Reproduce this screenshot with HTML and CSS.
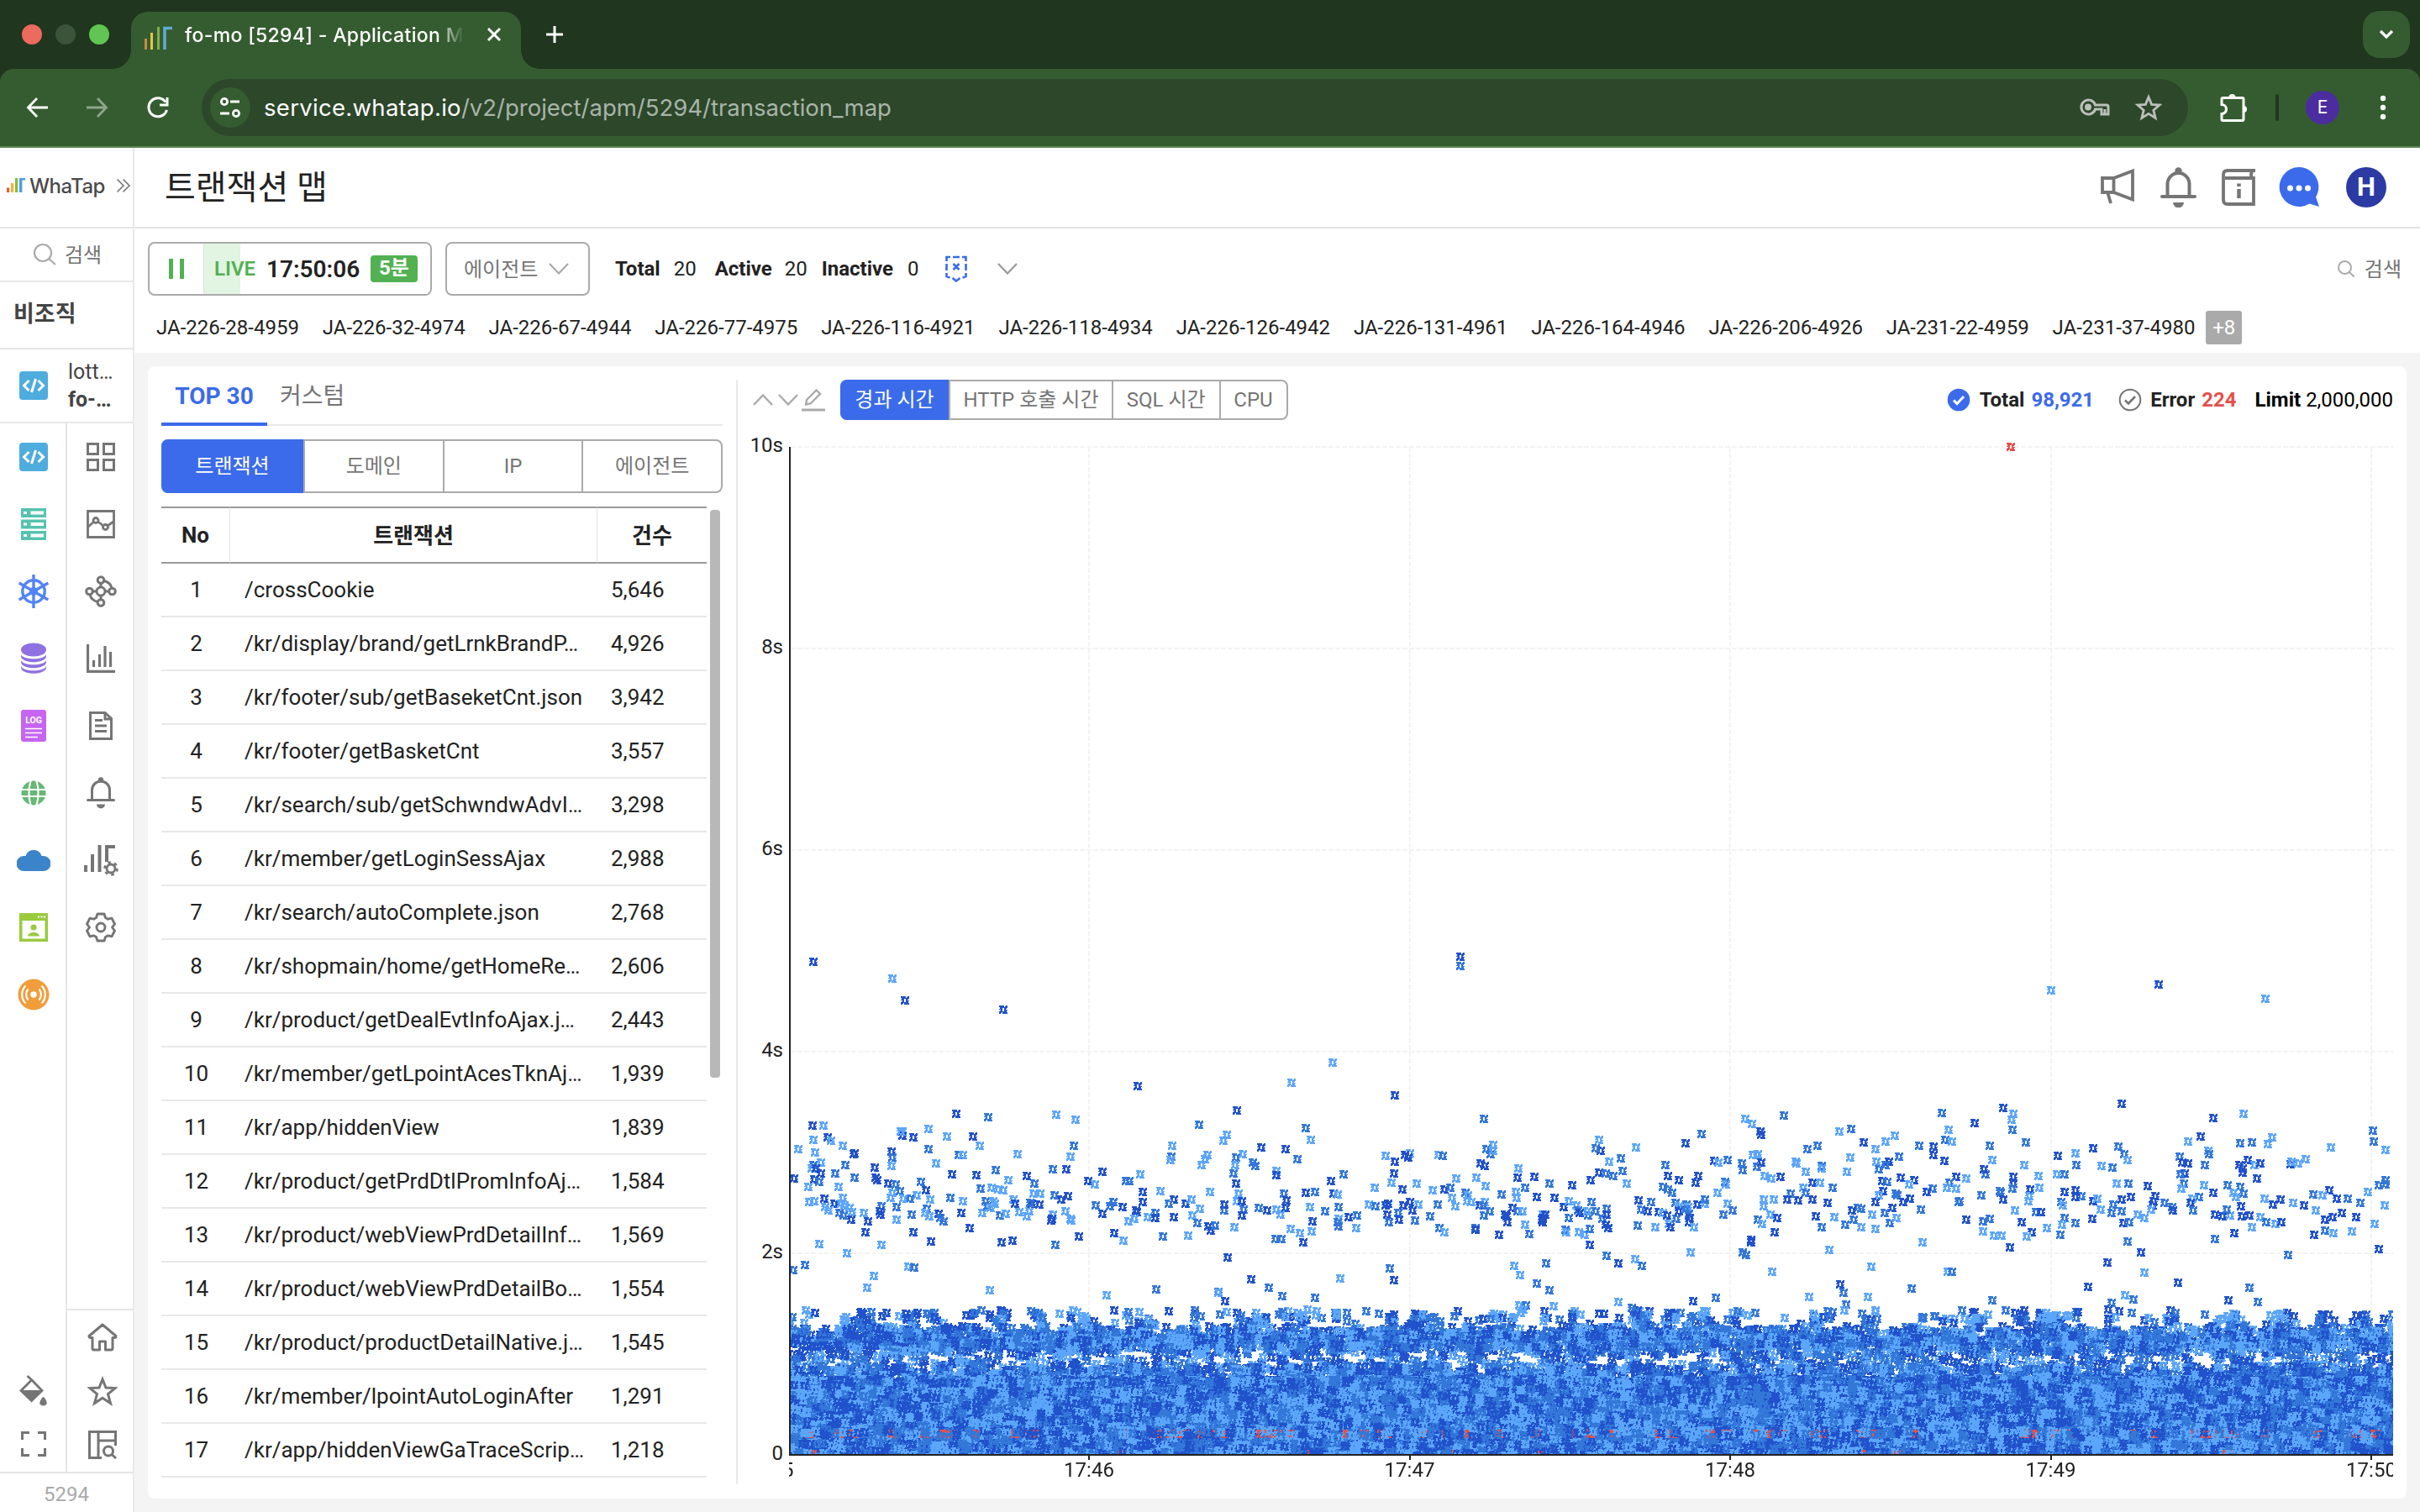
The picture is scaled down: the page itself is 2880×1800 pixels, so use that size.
FILE: index.html
```html
<!DOCTYPE html>
<html lang="ko">
<head>
<meta charset="utf-8">
<title>fo-mo [5294] - Application Monitoring</title>
<link rel="stylesheet" href="styles.css">
</head>
<body>
<div class="tabstrip">
  <div class="lights"><i class="red"></i><i class="off"></i><i class="green"></i></div>
  <div class="tab">
    <svg class="fav" width="34" height="28" viewBox="0 0 34 28"><path d="M1.500 15v13" stroke="#c98a4b" stroke-width="3"/><path d="M8.500 8v20" stroke="#e6c543" stroke-width="3"/><path d="M16.500 1v27" stroke="#7fae4a" stroke-width="3"/><path d="M24 28V2.500h9" stroke="#62a9d0" stroke-width="3.500" fill="none"/></svg>
    <span class="tab-title">fo-mo [5294] - Application Mo</span>
    <svg class="x" width="18" height="18" viewBox="0 0 18 18"><path d="M2 2l14 14M16 2L2 16" stroke="#fff" stroke-width="3"/></svg>
  </div>
  <svg class="plus" width="22" height="22" viewBox="0 0 22 22"><path d="M11 1v20M1 11h20" stroke="#fff" stroke-width="3"/></svg>
  <div class="tabmenu"><svg width="18" height="12" viewBox="0 0 18 12"><path d="M2 2l7 7 7-7" stroke="#fff" stroke-width="3.200" fill="none"/></svg></div>
</div>
<div class="toolbar">
  <svg class="nav" width="28" height="28" viewBox="0 0 28 28" fill="none" stroke="#fff" stroke-width="2.800"><path d="M27 14H4M14 3L3.500 14 14 25"/></svg>
  <svg class="nav fwd" width="28" height="28" viewBox="0 0 28 28" fill="none" stroke="#8ea68b" stroke-width="2.800"><path d="M1 14h23M14 3l10.500 11L14 25"/></svg>
  <svg class="nav" width="28" height="28" viewBox="0 0 28 28" fill="none" stroke="#fff" stroke-width="3"><path d="M24.500 17A11 11 0 1 1 23 7.500"/><path d="M25 2v9h-9"/></svg>
  <div class="omnibox">
    <div class="chip"><svg width="28" height="26" viewBox="0 0 28 26" fill="none" stroke="#fff" stroke-width="2.800"><circle cx="7" cy="6" r="3.600"/><path d="M14 6h11M2 20h11"/><circle cx="21" cy="20" r="3.600"/></svg></div>
    <span class="url"><b>service.whatap.io</b>/v2/project/apm/5294/transaction_map</span>
    <svg class="key" width="38" height="26" viewBox="0 0 38 26" fill="none" stroke="#bbc0b9" stroke-width="3"><path d="M19.500 10H33q2 0 2 2v9h-8v-6h-7.500A8.500 8.500 0 1 1 19.500 10z"/><circle cx="11" cy="12.500" r="4" fill="#bbc0b9" stroke="none"/><path d="M31 15v5"/></svg>
    <svg class="ostar" width="32" height="32" viewBox="0 0 32 32" fill="none" stroke="#bbc0b9" stroke-width="2.800"><path d="M16 3.500l3.600 8.800 9.400.7-7.200 6.200 2.300 9.200-8.100-5-8.100 5 2.300-9.200L3 13l9.400-.7z"/></svg>
  </div>
  <svg class="puzzle" width="34" height="36" viewBox="0 0 34 36" fill="none" stroke="#fff" stroke-width="3"><path d="M3 8q0-1.500 1.500-1.500h23Q29 6.500 29 8v24q0 1.500-1.500 1.500h-23Q3 33.500 3 32v-6.500a5.500 5.500 0 0 0 0-11z"/><path d="M11.500 6a4 4 0 0 1 8 0zM29 16a4 4 0 0 1 0 8z" fill="#fff" stroke="none"/></svg>
  <i class="tdiv"></i>
  <span class="acct">E</span>
  <svg class="dots" width="8" height="30" viewBox="0 0 8 30" fill="#fff"><circle cx="4" cy="4" r="3.200"/><circle cx="4" cy="15" r="3.200"/><circle cx="4" cy="26" r="3.200"/></svg>
</div>

<div class="app">
<aside class="side">
  <div class="logo">
    <svg width="22" height="18" viewBox="0 0 22 18"><path d="M0 11.500h3.200V17H0z" fill="#e2603a"/><path d="M5 6h3.200v11H5z" fill="#f1b43b"/><path d="M10 0h3.200v17H10z" fill="#85bb3c"/><path d="M15 0h7v2.500h-3.600V17H15z" fill="#4b9ee0"/></svg>
    <span>WhaTap</span>
    <svg width="18" height="18" viewBox="0 0 18 18" fill="none" stroke="#777" stroke-width="1.600"><path d="M1.500 1.500L9 9l-7.500 7.500M8.500 1.500L16 9l-7.500 7.500"/></svg>
  </div>
  <div class="side-search"><svg width="28" height="28" viewBox="0 0 28 28" fill="none" stroke="#aaa" stroke-width="2.200"><circle cx="12" cy="12" r="10"/><path d="M19 19l8 7"/></svg><span>검색</span></div>
  <div class="org">비조직</div>
  <div class="proj">
    <svg width="34" height="34" viewBox="0 0 34 34"><rect width="34" height="34" rx="4" fill="#4facde"/><path d="M11.500 11L5.500 17l6 6M22.500 11l6 6-6 6M19.500 9l-5 16" stroke="#fff" stroke-width="3" fill="none"/></svg>
    <div><p>lott…</p><p class="b">fo-…</p></div>
  </div>
  <div class="cols">
    <div class="col left">
      <a><svg width="34" height="34" viewBox="0 0 34 34"><rect width="34" height="34" rx="4" fill="#4facde"/><path d="M11.500 11L5.500 17l6 6M22.500 11l6 6-6 6M19.500 9l-5 16" stroke="#fff" stroke-width="3" fill="none"/></svg></a>
      <a><svg width="30" height="38" viewBox="0 0 30 38"><path d="M0 0h30v11H0zM0 13.500h30v11H0zM0 27h30v11H0z" fill="#56c3b0"/><path d="M3 4h4v3H3zM11.500 3.500H27v4H11.500zM3 17.500h4v3H3zM11.500 17H27v4H11.500zM3 31h4v3H3zM11.500 30.500H27v4H11.500z" fill="#fff"/></svg></a>
      <a><svg width="38" height="40" viewBox="0 0 38 40" fill="none" stroke="#5383f5"><circle cx="19" cy="20" r="13.200" stroke-width="3.400"/><path d="M19 0v40M1.700 10l34.600 20M36.300 10L1.700 30" stroke-width="3.400"/><circle cx="19" cy="20" r="5" fill="#5383f5" stroke="none"/></svg></a>
      <a><svg width="30" height="38" viewBox="0 0 30 38" fill="#8f71e1"><ellipse cx="15" cy="8.500" rx="15" ry="8"/><path d="M0 14c2 7 28 7 30 0v2.500c-1 9-29 9-30 0zM0 21c2 7 28 7 30 0v2.500c-1 9-29 9-30 0zM0 28c2 7 28 7 30 0v2c-1 9-29 9-30 0z"/></svg></a>
      <a><svg width="30" height="38" viewBox="0 0 30 38"><rect width="30" height="38" rx="3" fill="#c565f0"/><path d="M5 22.500h20M5 27.500h20M5 32.500h15" stroke="#fff" stroke-width="1.700"/><text x="15" y="16" text-anchor="middle" fill="#fff" font-size="10.500" font-weight="700" font-family="Roboto">LOG</text></svg></a>
      <a><svg width="30" height="30" viewBox="0 0 30 30"><circle cx="15" cy="15" r="14.500" fill="#66b873"/><g fill="none" stroke="#fff" stroke-width="2.200"><path d="M0 11h30M0 19h30"/><ellipse cx="15" cy="15" rx="5.500" ry="18"/></g></svg></a>
      <a><svg width="40" height="28" viewBox="0 0 40 28"><path d="M9 27a9 9 0 0 1-1-18h2.500a10 10 0 0 1 19 0H32a9 9 0 0 1-1 18z" fill="#3c84ca"/></svg></a>
      <a><svg width="34" height="34" viewBox="0 0 34 34"><path d="M0 0h34v34H0z" fill="#9acb3f"/><path d="M3.500 9h27v21.500h-27z" fill="#fff"/><circle cx="17" cy="17" r="3.600" fill="#9acb3f"/><path d="M10 27.500c0-6 14-6 14 0z" fill="#9acb3f"/><path d="M22 3.500h2v2h-2zM25.500 3.500h2v2h-2zM29 3.500h2v2h-2z" fill="#fff"/></svg></a>
      <a><svg width="38" height="38" viewBox="0 0 38 38"><circle cx="19" cy="19" r="18.500" fill="#f09d3a"/><circle cx="19" cy="19" r="3.700" fill="#fff"/><g fill="none" stroke="#fff" stroke-width="2.200"><path d="M12.500 12.500a10 10 0 0 0 0 13M25.500 12.500a10 10 0 0 1 0 13M9.500 8.500a15 15 0 0 0 0 21M28.500 8.500a15 15 0 0 1 0 21"/></g></svg></a>
      <span class="grow"></span>
      <a class="s"><svg width="34" height="38" viewBox="0 0 34 38"><path d="M9.500 2l6 5.500L27 19.500 14.500 31.500 2 19.500 14.500 7" fill="none" stroke="#757575" stroke-width="2.800"/><path d="M2 19h25L14.500 32z" fill="#757575"/><path d="M28.500 27c5 6 5 10 0 10s-5-4 0-10z" fill="#757575" stroke="#757575"/></svg></a>
      <a class="s"><svg width="30" height="30" viewBox="0 0 30 30" fill="none" stroke="#757575" stroke-width="3"><path d="M1.500 10V1.500H10M20 1.500h8.500V10M28.500 20v8.500H20M10 28.500H1.500V20"/></svg></a>
    </div>
    <div class="col right">
      <a><svg width="34" height="34" viewBox="0 0 34 34" fill="none" stroke="#757575" stroke-width="3"><path d="M1.500 1.500h12v12h-12zM20.500 1.500h12v12h-12zM1.500 20.500h12v12h-12zM20.500 20.500h12v12h-12z"/></svg></a>
      <a><svg width="34" height="34" viewBox="0 0 34 34" fill="none" stroke="#757575" stroke-width="2.800"><path d="M1.500 1.500h31v31h-31z"/><path d="M2 20l7-6M13.500 14l6.500 5M25 19l7-5"/><circle cx="11" cy="12.500" r="3"/><circle cx="22.500" cy="20.500" r="3"/></svg></a>
      <a><svg width="38" height="38" viewBox="0 0 38 38" fill="none" stroke="#757575" stroke-width="3"><circle cx="19" cy="19" r="5"/><circle cx="19" cy="5.500" r="3.800"/><circle cx="19" cy="32.500" r="3.800"/><circle cx="5.500" cy="19" r="3.800"/><circle cx="32.500" cy="19" r="3.800"/><path d="M19 9.500V14M19 24v4.500M9 19h5M24 19h5M23 6.500c5 1.500 8 4 9 8.500M15 31.500c-5-1.500-8-4-9-8.500"/></svg></a>
      <a><svg width="34" height="34" viewBox="0 0 34 34" fill="none" stroke="#757575" stroke-width="3.200"><path d="M1.500 0v32.300H34M8.500 27v-8M15.500 27V12M22 27V2M28.500 27V9"/></svg></a>
      <a><svg width="28" height="34" viewBox="0 0 28 34" fill="none" stroke="#757575" stroke-width="3"><path d="M1.500 1.500H19l7.500 7v24h-25z"/><path d="M19 1v8h8M7 10.500h9M7 17h14M7 23.500h14"/></svg></a>
      <a><svg width="34" height="38" viewBox="0 0 34 38"><path d="M6.500 26V15.500a10.500 10.500 0 0 1 21 0V26M1.500 27.500h31" fill="none" stroke="#757575" stroke-width="3" stroke-linecap="round"/><circle cx="17" cy="3.500" r="3.200" fill="#757575"/><path d="M12 32.500h10a5 5 0 0 1-10 0z" fill="#757575"/></svg></a>
      <a><svg width="42" height="38" viewBox="0 0 42 38" fill="none" stroke="#757575" stroke-width="4"><path d="M3 33v-8M11 33V12M19.500 33V1M28 21V3h10"/><circle cx="33" cy="29" r="5" stroke-width="2.800"/><circle cx="33" cy="29" r="7.500" stroke-width="2.600" stroke-dasharray="3.600 4.250"/></svg></a>
      <a><svg width="36" height="36" viewBox="0 0 36 36" fill="none" stroke="#757575" stroke-width="2.900" stroke-linejoin="round"><path d="M14 2h8l1.500 4.500 3 1.700 4.500-1 3.500 6.800-3 4 3 4-3.500 6.800-4.500-1-3 1.700L22 34h-8l-1.500-4.500-3-1.700-4.500 1L1.500 22l3-4-3-4L5 7.200l4.500 1 3-1.700z"/><circle cx="18" cy="18" r="5"/></svg></a>
      <span class="grow"></span>
      <div class="r-foot">
      <a class="s"><svg width="36" height="34" viewBox="0 0 36 34" fill="none" stroke="#757575" stroke-width="3" stroke-linejoin="round"><path d="M18 2l16 13.500q0 2-2 2h-2V30q0 2-2 2h-6.500V22h-7v10H8q-2 0-2-2V17.500H4q-2 0-2-2z"/></svg></a>
      <a class="s"><svg width="36" height="36" viewBox="0 0 36 36" fill="none" stroke="#757575" stroke-width="3"><path d="M18 4l4 10 11 .6-8.500 7 3 10.900L18 26.300 8.500 32.500l3-10.900L3 14.600 14 14z"/></svg></a>
      <a class="s"><svg width="36" height="34" viewBox="0 0 36 34" fill="none" stroke="#757575" stroke-width="3"><path d="M17 32.500H2.500v-31h31V18M13 2v30M13 12h20"/><circle cx="25" cy="24.500" r="5.500"/><path d="M29 28.500l5 4.500"/></svg></a>
      </div>
    </div>
  </div>
  <div class="pid">5294</div>
</aside>

<main class="main">
  <header class="head">
    <h1>트랜잭션 맵</h1>
    <div class="hicons">
      <svg width="48" height="48" viewBox="0 0 48 48" fill="none" stroke="#757575" stroke-width="3.800"><path d="M6 13h13.500v17H6zM19.500 13L42 4.500v34L19.500 30M12.500 31l3.500 12"/></svg>
      <svg width="48" height="48" viewBox="0 0 48 48"><path d="M11.500 33V20a13 13 0 0 1 26 0v13M5 35h39" fill="none" stroke="#757575" stroke-width="4" stroke-linecap="round"/><circle cx="24.500" cy="4.500" r="4.200" fill="#757575"/><path d="M18 42h13a6.500 6.500 0 0 1-13 0z" fill="#757575"/></svg>
      <svg width="48" height="48" viewBox="0 0 48 48" fill="none" stroke="#757575" stroke-width="3.800"><path d="M44 4H11q-5 0-5 5v30q0 5 5 5h31V13H8M40 5q-2 4 0 8"/><path d="M24.500 26v11M24.500 19.500v3.600" stroke-width="4.500"/></svg>
      <svg width="48" height="48" viewBox="0 0 48 48"><path d="M24.500 0a23.500 23.500 0 1 0 12 43.500L48 47l-4-11.500A23.500 23.500 0 0 0 24.500 0z" fill="#3b6bea"/><g fill="#fff"><circle cx="13.500" cy="25" r="3.500"/><circle cx="24" cy="25" r="3.500"/><circle cx="34.500" cy="25" r="3.500"/></g></svg>
      <span class="avatar">H</span>
    </div>
  </header>

  <section class="controls">
    <div class="ctl-row">
      <div class="live">
        <div class="pause"><i></i><i></i></div>
        <div class="live-in"><span class="lv">LIVE</span><span class="time">17:50:06</span><span class="range">5분</span></div>
      </div>
      <div class="select"><span>에이전트</span><svg width="24" height="14" viewBox="0 0 24 14" fill="none" stroke="#aaa" stroke-width="2.200"><path d="M1 1l11 11.500L23 1"/></svg></div>
      <div class="counts"><b>Total</b><span class="c1">20</span><b>Active</b><span class="c2">20</span><b>Inactive</b><span class="c3">0</span></div>
      <svg class="shield" width="26" height="32" viewBox="0 0 26 32" fill="none" stroke="#3b6bea" stroke-width="2.600"><path d="M1.500 7V2H6M9 2h8M20 2h4.500v5M1.500 10v8M24.500 10v8M1.500 21v4l4 1.500M24.500 21v4l-4 1.500M8.500 27l4.500 3.500 4.500-3.500M9.500 10l7 7M16.500 10l-7 7"/></svg>
      <svg width="24" height="14" viewBox="0 0 24 14" fill="none" stroke="#999" stroke-width="2.200"><path d="M1 1l11 11.500L23 1"/></svg>
      <div class="find"><svg width="20" height="20" viewBox="0 0 20 20" fill="none" stroke="#aaa" stroke-width="2"><circle cx="8.500" cy="8.500" r="7.500"/><path d="M14 14l5.500 5.500"/></svg><span>검색</span></div>
    </div>
    <div class="agents"><span>JA-226-28-4959</span><span>JA-226-32-4974</span><span>JA-226-67-4944</span><span>JA-226-77-4975</span><span>JA-226-116-4921</span><span>JA-226-118-4934</span><span>JA-226-126-4942</span><span>JA-226-131-4961</span><span>JA-226-164-4946</span><span>JA-226-206-4926</span><span>JA-231-22-4959</span><span>JA-231-37-4980</span><em>+8</em></div>
  </section>

  <section class="card">
    <div class="list">
      <div class="tabs"><span class="on">TOP 30</span><span>커스텀</span></div>
      <div class="seg"><span class="on">트랜잭션</span><span>도메인</span><span>IP</span><span>에이전트</span></div>
      <div class="tablewrap">
      <table>
        <thead><tr><th class="no">No</th><th>트랜잭션</th><th class="cnt">건수</th></tr></thead>
        <tbody>
        <tr><td>1</td><td>/crossCookie</td><td>5,646</td></tr>
        <tr><td>2</td><td>/kr/display/brand/getLrnkBrandP…</td><td>4,926</td></tr>
        <tr><td>3</td><td>/kr/footer/sub/getBaseketCnt.json</td><td>3,942</td></tr>
        <tr><td>4</td><td>/kr/footer/getBasketCnt</td><td>3,557</td></tr>
        <tr><td>5</td><td>/kr/search/sub/getSchwndwAdvI…</td><td>3,298</td></tr>
        <tr><td>6</td><td>/kr/member/getLoginSessAjax</td><td>2,988</td></tr>
        <tr><td>7</td><td>/kr/search/autoComplete.json</td><td>2,768</td></tr>
        <tr><td>8</td><td>/kr/shopmain/home/getHomeRe…</td><td>2,606</td></tr>
        <tr><td>9</td><td>/kr/product/getDealEvtInfoAjax.j…</td><td>2,443</td></tr>
        <tr><td>10</td><td>/kr/member/getLpointAcesTknAj…</td><td>1,939</td></tr>
        <tr><td>11</td><td>/kr/app/hiddenView</td><td>1,839</td></tr>
        <tr><td>12</td><td>/kr/product/getPrdDtlPromInfoAj…</td><td>1,584</td></tr>
        <tr><td>13</td><td>/kr/product/webViewPrdDetailInf…</td><td>1,569</td></tr>
        <tr><td>14</td><td>/kr/product/webViewPrdDetailBo…</td><td>1,554</td></tr>
        <tr><td>15</td><td>/kr/product/productDetailNative.j…</td><td>1,545</td></tr>
        <tr><td>16</td><td>/kr/member/lpointAutoLoginAfter</td><td>1,291</td></tr>
        <tr><td>17</td><td>/kr/app/hiddenViewGaTraceScrip…</td><td>1,218</td></tr>
        </tbody>
      </table>
      <i class="thumb"></i>
      </div>
    </div>
    <div class="chart">
      <div class="chead">
        <div class="cicons">
          <svg width="24" height="14" viewBox="0 0 24 14" fill="none" stroke="#aaa" stroke-width="2.400"><path d="M1 13L12 1.500 23 13"/></svg>
          <svg width="24" height="14" viewBox="0 0 24 14" fill="none" stroke="#aaa" stroke-width="2.400"><path d="M1 1l11 11.500L23 1"/></svg>
          <svg width="28" height="28" viewBox="0 0 28 28" fill="none" stroke="#aaa" stroke-width="2.400"><path d="M6 14L17.500 2.500l4.500 4.500L10.500 18.500 5 19.500z"/><path d="M0 26h28" stroke-width="3"/></svg>
        </div>
        <div class="metric"><span class="on">경과 시간</span><span>HTTP 호출 시간</span><span>SQL 시간</span><span>CPU</span></div>
        <div class="stat">
          <svg width="28" height="28" viewBox="0 0 28 28"><circle cx="14" cy="14" r="13.300" fill="#3b6bea"/><path d="M8 14.500l4 4 8-8.500" stroke="#fff" stroke-width="3" fill="none"/></svg>
          <b>Total</b><b class="blue">98,921</b>
          <svg class="e" width="28" height="28" viewBox="0 0 28 28"><circle cx="14" cy="14" r="12.300" fill="none" stroke="#757575" stroke-width="2"/><path d="M8 14.500l4 4 8-8.500" stroke="#757575" stroke-width="2.600" fill="none"/></svg>
          <b>Error</b><b class="red">224</b><b class="lim">Limit</b><span>2,000,000</span>
        </div>
      </div>
      <div class="plot">
        <div class="ylab"><span>10s</span><span>8s</span><span>6s</span><span>4s</span><span>2s</span><span>0</span></div>
        <div class="area">
          <canvas id="map" width="1909" height="1216"></canvas>
          <div class="xlab"><span>17:45</span><span>17:46</span><span>17:47</span><span>17:48</span><span>17:49</span><span>17:50</span></div>
        </div>
      </div>
    </div>
  </section>
</main>
</div>
<script src="map.js"></script>
</body>
</html>
```
FILE: styles.css
```css
* { box-sizing: border-box; }
body { margin: 0; width: 2880px; height: 1800px; overflow: hidden; background: #20361e; color: #222; font-family: Roboto, "Noto Sans CJK KR", sans-serif; font-size: 24px; }
svg { display: block; flex: none; }
p, h1 { margin: 0; }

/* browser window */
.tabstrip { display: flex; align-items: center; height: 82px; padding-right: 12px; }
.lights { display: flex; gap: 16px; padding-left: 26px; width: 156px; }
.lights i { width: 24px; height: 24px; border-radius: 50%; }
.lights .red { background: #ed6a5e; }
.lights .off { background: #3c5439; }
.lights .green { background: #61c554; }
.tab { position: relative; display: flex; align-items: center; width: 464px; height: 68px; margin-top: 14px; padding: 0 23px 14px 16px; border-radius: 20px 20px 0 0; background: #355c30; font-family: Inter, sans-serif; }
.tab::before, .tab::after { content: ""; position: absolute; bottom: 0; width: 22px; height: 22px; }
.tab::before { left: -22px; background: radial-gradient(circle at 0 0, transparent 21.500px, #355c30 22px); }
.tab::after { right: -22px; background: radial-gradient(circle at 100% 0, transparent 21.500px, #355c30 22px); }
.fav { margin-top: 7px; }
.tab-title { flex: 1; overflow: hidden; margin-left: 14px; margin-right: 24px; color: #fff; font-size: 23px; font-weight: 500; letter-spacing: 0.35px; line-height: 30px; padding-top: 2px; white-space: nowrap; -webkit-mask-image: linear-gradient(90deg, #000 300px, transparent 332px); mask-image: linear-gradient(90deg, #000 300px, transparent 332px); }
.plus { margin-left: 29px; }
.tabmenu { display: flex; align-items: center; justify-content: center; width: 56px; height: 56px; margin-left: auto; border-radius: 20px; background: #355c30; }
.toolbar { display: flex; align-items: center; height: 94px; padding: 0 40px 0 30px; border-bottom: 2px solid #5f8457; border-radius: 16px 16px 0 0; background: #355c30; }
.nav { margin-right: 44px; }
.omnibox { display: flex; align-items: center; width: 2364px; height: 68px; margin-left: -6px; padding: 0 31px 0 10px; border-radius: 34px; background: #2d472b; }
.chip { display: flex; align-items: center; justify-content: center; width: 48px; height: 48px; border-radius: 50%; background: #355c30; }
.url { flex: 1; margin-left: 16px; color: #a9b5a8; font-family: Inter, sans-serif; font-size: 27.500px; }
.url b { color: #fff; font-weight: 400; letter-spacing: 0.3px; }
.ostar { margin-left: 29px; }
.puzzle { margin-left: 37px; }
.tdiv { width: 4px; height: 32px; margin-left: 33px; border-radius: 2px; background: #20361e; }
.acct { width: 40px; height: 40px; margin: 0 48px 0 32px; border-radius: 50%; background: #4c2d9f; color: #fff; font: 21px/40px Inter, sans-serif; text-align: center; }

/* application shell */
.app { display: flex; height: 1624px; background: #fff; }
.side { display: flex; flex-direction: column; width: 160px; border-right: 2px solid #e9e9e9; }
.logo { display: flex; align-items: center; height: 96px; padding: 0 0 4px 8px; border-bottom: 2px solid #e6e6e6; }
.logo span { width: 108px; padding-left: 5px; color: #4a4a4a; font-family: Inter, sans-serif; font-size: 24px; font-weight: 500; letter-spacing: -0.5px; }
.side-search { display: flex; align-items: center; gap: 10px; height: 64px; padding: 0 0 0 39px; border-bottom: 2px solid #e6e6e6; color: #757575; }
.side-search span { padding-bottom: 4px; }
.org { height: 80px; padding-left: 16px; border-bottom: 2px solid #e6e6e6; color: #444; font-size: 27px; font-weight: 700; line-height: 77px; }
.proj { display: flex; align-items: center; gap: 24px; height: 88px; padding-left: 23px; border-bottom: 2px solid #e6e6e6; color: #444; }
.proj p { font-size: 25px; line-height: 33px; }
.proj .b { font-weight: 700; }
.cols { display: flex; flex: 1; }
.col { display: flex; flex-direction: column; align-items: center; }
.left { width: 80px; border-right: 2px solid #e6e6e6; padding-bottom: 1px; }
.right { width: 78px; }
.col a { display: flex; align-items: center; justify-content: center; width: 80px; height: 80px; }
.left a { padding-left: 1px; }
.right a { padding-left: 2px; }
.col a.s { height: 64px; }
.grow { flex: 1; }
.r-foot { width: 78px; border-top: 2px solid #e6e6e6; }
.r-foot a { padding-left: 4px; }
.pid { height: 48px; border-top: 2px solid #e6e6e6; color: #aaa; line-height: 51px; text-align: center; }

.main { display: flex; flex-direction: column; flex: 1; background: #f4f4f4; }
.head { display: flex; align-items: center; justify-content: space-between; height: 96px; padding: 0 40px 0 36px; border-bottom: 2px solid #e3e3e3; background: #fff; }
.head h1 { padding-top: 1px; font-size: 40px; font-weight: 400; line-height: 48px; }
.hicons { display: flex; align-items: center; gap: 24px; }
.avatar { width: 48px; height: 48px; margin-left: 8px; border-radius: 50%; background: #2c3aa3; color: #fff; font-size: 31px; font-weight: 700; line-height: 48px; text-align: center; }

.controls { height: 148px; padding: 16px 22px 0 16px; background: #fff; }
.ctl-row { display: flex; align-items: center; height: 64px; }
.live { display: flex; width: 338px; height: 64px; border: 2px solid #aaa; border-radius: 8px; }
.pause { display: flex; align-items: center; gap: 8px; width: 64px; padding-left: 23px; }
.pause i { width: 5px; height: 24px; background: #52b152; }
.live-in { display: flex; flex: 1; align-items: center; padding-left: 12px; border-left: 1px solid #ddd; background: linear-gradient(90deg, #e1f5e2 43px, #fff 43px); border-radius: 0 6px 6px 0; }
.lv { width: 62px; color: #52b152; font-size: 24px; font-weight: 600; }
.time { width: 124px; font-size: 28px; font-weight: 600; }
.range { width: 56px; height: 32px; border-radius: 4px; background: #52b152; color: #fff; font-weight: 700; line-height: 31px; text-align: center; }
.select { display: flex; align-items: center; gap: 13px; width: 172px; height: 64px; margin-left: 16px; padding-left: 20px; border: 2px solid #aaa; border-radius: 8px; color: #757575; }
.select span, .find span { padding-bottom: 3px; }
.counts { display: flex; align-items: center; margin-left: 30px; }
.c1 { margin: 0 22px 0 16px; }
.c2 { margin: 0 17px 0 15px; }
.c3 { margin: 0 31px 0 17px; }
.counts b, .stat b { font-weight: 700; }
.shield { margin-right: 36px; }
.find { display: flex; align-items: center; gap: 12px; margin-left: auto; color: #757575; }
.agents { display: flex; align-items: center; gap: 27.850px; height: 40px; margin-top: 18px; padding-left: 10px; }
.agents em { width: 43px; height: 40px; margin-left: -15px; border-radius: 3px; background: #aaa; color: #fff; font-style: normal; line-height: 40px; text-align: center; }

.card { display: flex; height: 1348px; margin: 16px 16px 0; padding: 16px; border-radius: 8px; background: #fff; }
.list { width: 668px; }
.tabs { display: flex; gap: 33px; height: 55px; border-bottom: 2px solid #e8e8e8; color: #757575; font-size: 28px; line-height: 39px; }
.tabs .on { width: 126px; height: 55px; margin-right: -18px; border-bottom: 4px solid #3b6bea; color: #3b6bea; font-weight: 700; text-align: center; line-height: 40px; }
.seg { display: flex; height: 64px; margin-top: 16px; border: 2px solid #aaa; border-radius: 8px; color: #757575; line-height: 60px; text-align: center; }
.seg span { flex: 1; border-left: 2px solid #aaa; }
.seg .on { flex: 0 0 169px; margin: -2px 0 -2px -2px; border: 0; border-radius: 8px 0 0 8px; background: #3b6bea; color: #fff; line-height: 64px; }
.tablewrap { display: flex; gap: 4px; margin-top: 16px; }
table { width: 649px; table-layout: fixed; border-collapse: separate; border-spacing: 0; font-size: 26px; }
th { height: 68px; padding: 0 0 3px; border-top: 2px solid #999; border-bottom: 2px solid #999; font-weight: 700; }
th + th { border-left: 1px solid #e3e3e3; }
.no { width: 81px; padding-bottom: 1px; }
.cnt { width: 131px; }
td { height: 64px; padding: 0; border-bottom: 2px solid #e8e8e8; white-space: nowrap; }
td:first-child { text-align: center; padding-left: 2px; }
td:nth-child(2) { padding-left: 18px; }
td:last-child { padding-left: 17px; }
.thumb { width: 12px; height: 676px; margin-top: 4px; border-radius: 4px; background: #b8b8b8; }

.chart { width: 1972px; height: 1315px; margin-left: 16px; border-left: 2px solid #e9e9e9; }
.chead { display: flex; align-items: center; height: 48px; padding-left: 18px; }
.cicons { display: flex; align-items: center; gap: 6px; width: 104px; }
.cicons svg:last-child { margin-left: -2px; }
.metric { display: flex; height: 48px; border: 2px solid #aaa; border-radius: 8px; color: #757575; line-height: 44px; text-align: center; }
.metric span { width: 127.500px; border-left: 2px solid #aaa; }
.metric .on { width: 129px; margin: -2px 0 -2px -2px; border: 0; border-radius: 8px 0 0 8px; background: #3b6bea; color: #fff; line-height: 48px; }
.metric span:nth-child(2) { width: 194px; }
.metric span:nth-child(4) { width: 80px; }
.stat { display: flex; align-items: center; margin-left: auto; }
.stat svg { margin-right: 11px; }
.stat svg.e { margin-left: 29px; margin-right: 10px; }
.stat .blue { margin-left: 8px; color: #3b6bea; }
.stat .red { margin: 0 22px 0 8px; color: #e4504b; }
.stat span { margin-left: 6px; color: #000; }
.stat .lim { color: #000; }
.plot { display: flex; }
.ylab { display: flex; flex-direction: column; justify-content: space-between; width: 61px; height: 1230px; padding-right: 7px; margin-top: 15px; text-align: right; line-height: 30px; }
.area { width: 1909px; padding-top: 24px; overflow: hidden; }
.area canvas { display: block; }
.xlab { display: flex; margin-left: -215.250px; margin-top: -6px; line-height: 32px; }
.xlab span { flex: none; width: 381.500px; text-align: center; }
```
FILE: map.js
```js
// Transaction map: x 0..1909 px, y 8 (10s) .. 1208 (0s), 120 px per second
const ctx = document.getElementById('map').getContext('2d');
const COLORS = { d: '#2152cb', m: '#3377d8', l: '#5ca6fa', r: '#e4504b' };
const GLYPH = [
  '######..##',
  '######.###',
  '.#########',
  '.###..###.',
  '####..##..',
  '..##..####',
  '.###..###.',
  '#########.',
  '###.######',
  '##..######'
];
const stamps = {};
for (const k in COLORS) {
  const c = document.createElement('canvas');
  c.width = c.height = 10;
  const g = c.getContext('2d');
  g.fillStyle = COLORS[k];
  GLYPH.forEach((row, y) => [...row].forEach((ch, x) => { if (ch === '#') g.fillRect(x, y, 1, 1); }));
  stamps[k] = c;
}
let seed = 5294;
const rnd = () => {
  seed = (seed + 0x6D2B79F5) | 0;
  let t = Math.imul(seed ^ (seed >>> 15), 1 | seed);
  t = (t + Math.imul(t ^ (t >>> 7), 61 | t)) ^ t;
  return ((t ^ (t >>> 14)) >>> 0) / 4294967296;
};
const dot = (k, x, y) => ctx.drawImage(stamps[k], Math.round(x - 5), Math.round(y - 5));
const pick = () => 'dml'[Math.floor(rnd() * 3)];

// grid
ctx.fillStyle = '#f3f3f3';
for (let i = 0; i < 5; i++) for (let x = 2; x < 1909; x += 8) ctx.fillRect(x, 7 + i * 240, 6, 2);
for (let i = 1; i < 6; i++) for (let y = 8; y < 1208; y += 8) ctx.fillRect(Math.round(-25.5 + i * 381.5), y, 2, 6);

// slow transactions, grouped by block: origin x, origin y, x scale, y scale
const BLOCKS = [
  [-939, -524, 1, 1, 'd968,1145 l1062,1165 d1077,1191 d1194,1202 d1738,1139 m1738,1150 l2441,1179 d2569,1172 l2696,1189 r2393,532'],
  [-79, 676, 1.96, 2.613, 'l1422,170 l1327,232 d968,243 d1199,319 d545,328 m619,340 l778,332 l824,348 d209,366 l235,366 l211,410 l420,384 d420,397 l415,384 d445,402 l480,376 l523,400 d584,400 l176,438 l215,450 d245,402 l252,412 l280,429 l600,429 m481,438 d307,452 d306,455 m287,489 d354,496 d394,446 m395,464 l394,490 l497,484 m550,457 l560,457 d535,517 d592,519 m637,504 l688,455 m819,429 l811,463 m770,502 d801,502 d709,522 m728,546 l667,535 d167,530 m212,488 l229,482 l208,498 d218,500 d230,515 d214,532 m226,541 m263,515 m308,528 l270,557 l200,557 d357,528 d361,535 d386,546 m403,550 m413,570 l396,576 l392,591 l453,583 m438,592 l422,594 m462,541 d475,566 l484,597 m601,561 m531,591 l561,601 m614,602 l632,600 l655,566 l628,558 l642,565 d237,592 l214,600 l202,604 d261,609 l281,591 l276,610 l240,620 l247,631 m272,637 l285,614 l295,622 l302,634 m282,646 d300,658 l329,638 d340,663 m370,617 d368,642 d367,632 m406,618 l405,658 m441,643 m476,625 l472,638 l482,648 d504,640 m508,652 m516,664 d557,638 l605,638 m618,616 l626,622 l636,610 m646,645 l660,640 l678,597 d683,608 l691,635 l709,648 l716,632 d722,609 d738,612 m717,605 l726,578 l741,577 m774,583 d790,596 d806,585 l799,633 l770,643 d766,660 d769,655 l811,655 l813,660 d333,698 d445,698 d577,685 d486,726 m226,734 l226,734 l370,737 d651,728 d676,723 m777,737 d831,710 l291,762 m192,800 m165,815 l434,804 m446,807 l353,834 l337,870 l623,878 m1111,363 d886,510 l974,517 d853,538 l868,548 m941,539 m948,539 l1022,570 d980,572 d980,603 d1052,596 m1041,610 d1079,608 l1093,597 m911,603 m870,614 m903,617 d932,618 d885,640 d965,630 d967,635 l961,657 l946,665 l992,650 m1010,638 d1009,652 d1052,650 l1095,646 l1113,625 m1107,669 d914,699 l935,724 m1028,712 l1086,709 d1132,680 d1138,692 m1149,677 l1048,429 m1046,462 l1044,473 l1131,457 l1126,470 l1117,489 l1137,572 m1170,630 d1170,611 l1168,412 l1176,395 m1198,464 l1213,455 l1195,489 m1191,516 d1197,546 l1203,577 l1199,600 d1211,600 m1216,627 d1211,646 l1193,682 d1257,433 d1314,439 m1340,470 m1237,481 m1243,490 l1291,506 d1291,521 m1360,374 l1372,409 m1449,517 d1419,538 m1310,577 d1315,598 d1314,621 m1250,622 d1271,630 l1292,627 l1302,643 l1324,687 d1360,575 m1381,572 l1370,619 m1406,632 d1376,664 l1374,694 l1347,699 m1289,719 m1304,719 d1354,729 d1424,577 l1434,580 m1436,619 l1436,657 m1434,667 m1436,680 d1460,651 m1479,645 l1478,685 l1521,559 l1507,612 d1177,776 d1233,844 m1274,870 m1305,896 m1157,882 l1157,886 d1172,912 m1381,902 l1440,841 m1012,876 l895,893'],
  [701, 696, 3, 3, 'd60,252 m378,336 l27,468 d60,489 d57,531 l48,564 d87,588 l114,459 d96,465 d108,474 l138,567 l216,465 m231,468 d366,495 d381,504 m387,444 m402,462 l411,429 l411,450 l279,549 l351,546 l384,576 l195,591 d237,588 m258,582 l264,618 l276,648 m312,600 l321,609 l318,630 l333,633 d363,645 l381,633 m375,645 m399,666 m378,681 m213,642 m186,684 m132,699 l144,642 d114,633 d123,663 d90,645 m72,672 d75,696 d33,678 m39,705 d27,645 d36,639 m-9,648 m219,726 l237,741 m348,726 d348,732 d432,750 m441,606 l501,513 d498,546 d558,543 m525,582 l492,597 l495,618 m612,567 d567,615 d630,618 d480,654 m498,666 l516,666 d453,678 d459,684 d462,705 l525,714 m540,747 l588,678 d597,678 d588,690 d585,696 d588,705 d693,573 d663,651 l681,630 l708,645 m714,663 d720,672 m681,690 m669,732 l672,741 l717,741 l738,750 m756,729 d756,786 m762,633 m750,681 l747,666 m777,666 m801,693 m816,657 d816,678 d813,714 d822,726 d759,555 l789,411 d795,450 m777,441 l825,489 m867,477 d789,528 m813,531 m840,540 m873,522 l888,567 l921,438 d930,627 m975,633 m939,660 d963,666 d1002,669 l1017,672 d1032,681 m927,717 l990,723 l1038,711 d1044,723 m1065,693 d1098,423 m1155,390 m1026,501 d1035,540 d1074,555 d1143,540 d1134,564 m1017,579 m1035,588 m1050,600 m1062,636 l1074,648 d1074,666 m1101,642 l1106,650 m1098,660 m1110,675 d1113,690 d1110,705 l1128,723 d1140,642 l1167,639 m1167,624 d1200,486 l1215,492 m1248,483 m1239,561 l1242,570 l1212,600 l1248,639 m1266,663 m1233,678 m1299,495 m1302,519 l1338,465 l1356,462 m1353,507 l1311,336 l1335,354 m816,825 d858,852 l918,837 m942,861 l486,861 m600,852 l507,894 m567,924 m612,948 m42,870 d57,912 l1116,813 m1302,813 m1314,822 d1332,768 d1332,777 d1125,987 m1206,975 l858,990 l627,1005 l504,1002 m528,1002 m906,1011 l933,1023'],
  [1141, 676, 1.96, 2.613, 'm84,334 d30,385 d31,395 l22,456 d31,481 m139,438 m162,429 l111,478 l113,484 l135,510 m173,490 l172,500 l39,522 l54,530 d77,525 d151,544 l168,544 m198,558 l130,558 m136,575 m100,577 d93,595 d118,598 d150,596 d186,605 l60,595 l37,597 l37,617 l52,643 d68,653 d159,648 m173,681 l201,651 m24,658 l34,671 d63,698 l190,752 l57,820 l213,384 m241,376 m453,326 d529,358 d596,310 l619,330 l615,348 m617,380 l468,379 m460,411 l477,415 l343,397 l321,415 d271,418 l298,438 l239,465 l231,510 m400,429 d434,430 d433,456 d458,476 m352,463 d330,478 m321,489 l300,478 m306,502 d357,528 d313,537 m326,541 d388,536 l377,549 d486,524 m470,543 l509,530 l465,558 l486,561 m431,561 d418,571 m544,583 m554,518 d551,502 m564,429 l570,473 m649,418 l645,489 d723,460 l678,523 d620,524 d620,545 m617,562 l680,558 d658,564 m588,570 m590,576 d596,597 l657,586 l654,600 l623,630 m672,635 d685,634 d315,570 m344,577 m348,582 d363,604 d378,593 l306,583 d298,603 d337,622 m320,638 l290,642 m264,624 m256,622 d243,630 m247,658 m228,673 l265,682 l298,687 m332,669 l347,653 m404,627 m494,600 m492,604 d510,658 m564,656 m548,663 l549,694 l574,708 l592,708 d638,667 d662,697 l651,711 l698,685 d611,745 l407,729 l288,805 l466,821 m476,821 m382,873 d215,860 m223,886 l280,899 l143,899 m229,922 m570,909 d873,298 d1086,342 l1156,329 d1056,400 l1027,416 d805,436 l764,452 m865,432 m878,455 l886,473 l825,491 m850,496 m767,489 l722,518 m738,518 d739,572 m778,586 d764,568 d764,587 d806,600 l815,593 m853,611 l823,627 m848,637 m731,603 l735,615 m738,653 l733,673 m764,669 d804,656 m729,706 l860,546 m888,546 d933,554 d873,597 d893,588 d951,585 d947,600 d945,613 l940,628 m972,606 m990,619 d992,629 m872,633 l909,643 l926,652 d877,670 m889,667 m885,726 d918,760 d838,792 l926,823 d794,868 d1003,854 m1007,463 d1014,482 d1028,484 m1066,489 l1074,444 m1077,454 d1020,515 m1010,518 m1017,546 l1012,561 l1064,551 m1053,588 d1086,575 l1036,594 d1033,606 m1038,629 d1090,643 d1107,648 l1125,645 m1117,627 m1090,719 d1135,699 m1148,420 m1176,418 l1223,402 l1213,423 d1147,489 d1166,473 d1155,500 d1154,512 l1181,488 d1195,484 d1188,530 m1120,551 m1149,557 l1132,575 l1138,588 m1156,577 d1151,617 d1152,648 d1171,645 l1196,651 m1209,666 l1176,682 l1206,593 d1225,611 d1243,596 l1230,672 d1244,666 l1272,606 d1298,614 m1261,768 m1170,870 d1266,485 l1269,478 l1283,484 l1302,470 l1360,434 m1458,381 m1460,415 l1487,442 m1488,536 m1487,548 m1472,551 l1446,572 l1486,614 m1429,606 m1399,593 d1374,593 d1357,567 m1319,580 l1340,583 l1324,630 d1385,638 d1365,651 d1347,658 d1419,651 m1346,693 l1366,699 l1409,694 d1321,706 l1463,672 d1472,750 d1121,909 m1190,914 l880,894 m899,907 m848,917'],
];
for (const [ox, oy, sx, sy, list] of BLOCKS)
  for (const p of list.split(' ')) {
    const [x, y] = p.slice(1).split(',').map(Number);
    dot(p[0], ox + x / sx, oy + y / sy);
  }

// bulk of the traffic below 1.4s
for (let i = 0; i < 45; i++) {
  const x = rnd() * 1915, y = 1034 + rnd() * 8, k = pick();
  for (let j = 0; j < 6; j++) dot(rnd() < 0.5 ? k : pick(), x + (rnd() - 0.5) * 16, y + rnd() * 18);
}
for (let i = 0; i < 170; i++) dot(pick(), rnd() * 1915, 1036 + rnd() * 16);
for (let i = 0; i < 2900; i++) dot(pick(), rnd() * 1915, 1052 + (rnd() + rnd()) / 2 * 36);
for (let i = 0; i < 1500; i++) dot(pick(), rnd() * 1915, 1075 + rnd() * 48);
for (let i = 0; i < 1200; i++) dot(pick(), rnd() * 1915, 1102 + rnd() * 22);
for (let i = 0; i < 32000; i++) dot(pick(), rnd() * 1915, 1118 + Math.pow(rnd(), 0.9) * 94);
// errors, partly covered by later transactions
for (let i = 0; i < 95; i++) {
  const x = rnd() * 1900, y = rnd() < 0.9 ? 1183 : 1207;
  dot('r', x, y);
  for (let j = 0; j < 3; j++) dot(pick(), x + (rnd() - 0.5) * 14, y + (rnd() - 0.5) * 10);
}

// axes
ctx.clearRect(0, 1209, 1909, 7);
ctx.fillStyle = '#222';
ctx.fillRect(0, 8, 2, 1201);
ctx.fillRect(0, 1207, 1909, 2);
for (let i = 1; i < 6; i++) ctx.fillRect(Math.round(-25.5 + i * 381.5), 1209, 2, 5);
```
